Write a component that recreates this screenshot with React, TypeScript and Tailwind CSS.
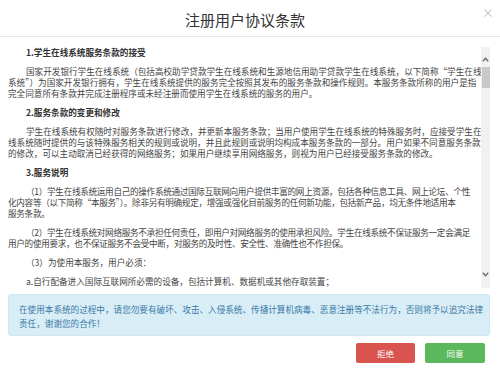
import React from "react";

const sections: { title?: string; tight?: boolean; lines: string[] }[] = [
  { title: "1.学生在线系统服务条款的接受", lines: [] },
  {
    lines: [
      "国家开发银行学生在线系统（包括高校助学贷款学生在线系统和生源地信用助学贷款学生在线系统，以下简称“学生在线",
      "系统”）为国家开发银行拥有，学生在线系统提供的服务完全按照其发布的服务条款和操作规则。本服务条款所称的用户是指",
      "完全同意所有条款并完成注册程序或未经注册而使用学生在线系统的服务的用户。",
    ],
  },
  { title: "2.服务条款的变更和修改", lines: [] },
  {
    lines: [
      "学生在线系统有权随时对服务条款进行修改，并更新本服务条款；当用户使用学生在线系统的特殊服务时，应接受学生在",
      "线系统随时提供的与该特殊服务相关的规则或说明，并且此规则或说明均构成本服务条款的一部分。用户如果不同意服务条款",
      "的修改，可以主动取消已经获得的网络服务；如果用户继续享用网络服务，则视为用户已经接受服务条款的修改。",
    ],
  },
  { title: "3.服务说明", lines: [] },
  {
    tight: true,
    lines: [
      "（1）学生在线系统运用自己的操作系统通过国际互联网向用户提供丰富的网上资源，包括各种信息工具、网上论坛、个性",
      "化内容等（以下简称“本服务”）。除非另有明确规定，增强或强化目前服务的任何新功能，包括新产品，均无条件地适用本",
      "服务条款。",
    ],
  },
  {
    tight: true,
    lines: [
      "（2）学生在线系统对网络服务不承担任何责任，即用户对网络服务的使用承担风险。学生在线系统不保证服务一定会满足",
      "用户的使用要求，也不保证服务不会受中断，对服务的及时性、安全性、准确性也不作担保。",
    ],
  },
  { lines: ["（3）为使用本服务，用户必须："] },
  { lines: ["a.自行配备进入国际互联网所必需的设备，包括计算机、数据机或其他存取装置；"] },
];

function Chevron({ up }: { up?: boolean }) {
  return (
    <svg width="7" height="5" viewBox="0 0 7 5" className="block">
      <polyline
        points={up ? "0.8,4.2 3.5,1.2 6.2,4.2" : "0.8,0.8 3.5,3.8 6.2,0.8"}
        fill="none"
        stroke="#666"
        strokeWidth="1.3"
      />
    </svg>
  );
}

export default function App() {
  return (
    <div className="w-[500px] h-[370px] bg-white flex flex-col font-['Noto_Sans_CJK_SC','Noto_Sans',sans-serif] overflow-hidden">
      {/* header */}
      <div className="h-[37px] shrink-0 border-b border-[#e8e8e8] flex px-[8px]">
        <div className="flex-1 text-center text-[15px] leading-[20px] pt-[10px] text-[#333] font-normal">
          注册用户协议条款
        </div>
        <button className="w-[10px] mt-[7px] self-start text-[12px] leading-[12px] text-[#c4c4c4]">×</button>
      </div>

      {/* body */}
      <div className="flex-1 flex flex-col pl-[8px] pr-[10px] pt-[10px]">
        <div className="h-[241px] flex">
          <div className="flex-1 overflow-hidden pr-[3px] text-[8.6px] leading-[11px] text-[#444]">
            {sections.map((s, i) =>
              s.title ? (
                <div key={i} className="indent-[18px] font-bold text-[#333] mb-[8px] whitespace-nowrap">
                  {s.title}
                </div>
              ) : (
                <div
                  key={i}
                  className={
                    s.tight
                      ? "indent-[18px] mb-[8px] whitespace-nowrap tracking-[-0.3px]"
                      : "indent-[18px] mb-[8px] whitespace-nowrap"
                  }
                >
                  {s.lines.map((l, j) => (
                    <React.Fragment key={j}>
                      {j > 0 && <br />}
                      {l}
                    </React.Fragment>
                  ))}
                </div>
              )
            )}
          </div>
          <div className="w-[9px] bg-[#f1f1f1] flex flex-col items-center">
            <div className="pt-[10px] h-[20px]">
              <Chevron up />
            </div>
            <div className="w-[8px] h-[21px] bg-[#c8c8c8]" />
            <div className="flex-1" />
            <div className="pb-[11px]">
              <Chevron />
            </div>
          </div>
        </div>

        <div className="mt-[6px] h-[42px] rounded-[3px] bg-[#d9edf7] border border-[#cfe7f3] pl-[10px] pr-[8px] pt-[7px] text-[8.6px] leading-[14px] text-[#3a7aa6] whitespace-nowrap">
          在使用本系统的过程中，请您勿要有破坏、攻击、入侵系统、传播计算机病毒、恶意注册等不法行为，否则将予以追究法律
          <br />
          责任，谢谢您的合作！
        </div>

        <div className="mt-[7px] flex justify-end gap-[10px] pr-[5px]">
          <button className="w-[59px] h-[20px] rounded-[2px] bg-[#d9534f] text-white text-[8.5px] leading-[20px]">
            拒绝
          </button>
          <button className="w-[60px] h-[20px] rounded-[2px] bg-[#5cb85c] text-white text-[8.5px] leading-[20px]">
            同意
          </button>
        </div>
      </div>
    </div>
  );
}
